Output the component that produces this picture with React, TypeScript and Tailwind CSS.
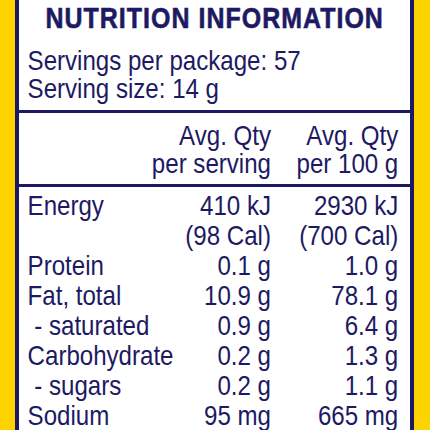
import React from 'react';

const rows: { label: string; serving: string[]; per100: string[] }[] = [
  { label: 'Energy', serving: ['410 kJ', '(98 Cal)'], per100: ['2930 kJ', '(700 Cal)'] },
  { label: 'Protein', serving: ['0.1 g'], per100: ['1.0 g'] },
  { label: 'Fat, total', serving: ['10.9 g'], per100: ['78.1 g'] },
  { label: '\u00a0- saturated', serving: ['0.9 g'], per100: ['6.4 g'] },
  { label: 'Carbohydrate', serving: ['0.2 g'], per100: ['1.3 g'] },
  { label: '\u00a0- sugars', serving: ['0.2 g'], per100: ['1.1 g'] },
  { label: 'Sodium', serving: ['95 mg'], per100: ['665 mg'] },
];

// the label type is a condensed grotesque, so the panel is set in
// Liberation Sans and squeezed horizontally
const App = () => {
  return (
    <div className="w-[430px] h-[430px] overflow-hidden bg-[#fdd300] flex">
      <div className="ml-[15px] w-[399px] h-full overflow-hidden bg-white border-x-4 border-[#1d1a63]">
        <div
          className="w-[455px] scale-x-[0.86] origin-left text-[#1d1a63] text-[28px] whitespace-nowrap"
          style={{ fontFamily: '"Liberation Sans", Arial, sans-serif' }}
        >
          <h1 className="text-center font-bold text-[29px] leading-[36px] tracking-[1.2px] [-webkit-text-stroke:0.6px_#1d1a63]">
            NUTRITION INFORMATION
          </h1>
          <div className="pl-[10px] pt-[11px] pb-[7px] leading-[28px] border-b-[3px] border-[#1d1a63]">
            <p>Servings per package: 57</p>
            <p>Serving size: 14 g</p>
          </div>
          <div className="grid grid-cols-[minmax(0,1fr)_150px_148px] pl-[10px] pr-[14px] pt-[9px] pb-[6px] leading-[28px] text-right border-b-[3px] border-[#1d1a63]">
            <div />
            <div>
              <p>Avg. Qty</p>
              <p>per serving</p>
            </div>
            <div>
              <p>Avg. Qty</p>
              <p>per 100 g</p>
            </div>
          </div>
          <div className="grid grid-cols-[minmax(0,1fr)_150px_148px] pl-[10px] pr-[14px] pt-[4px] leading-[30px]">
            {rows.map((r) => (
              <React.Fragment key={r.label}>
                <div>{r.label}</div>
                <div className="text-right">
                  {r.serving.map((s) => (
                    <p key={s}>{s}</p>
                  ))}
                </div>
                <div className="text-right">
                  {r.per100.map((s) => (
                    <p key={s}>{s}</p>
                  ))}
                </div>
              </React.Fragment>
            ))}
          </div>
        </div>
      </div>
    </div>
  );
};

export default App;
